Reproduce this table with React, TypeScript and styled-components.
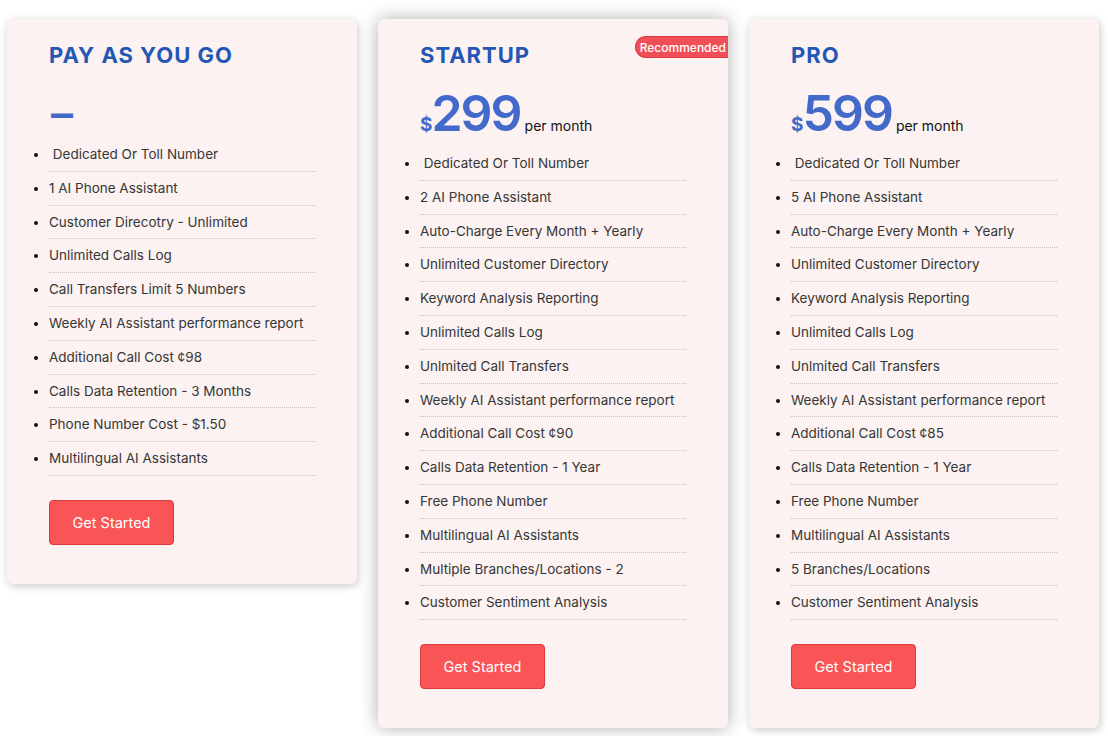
import styled, { createGlobalStyle } from 'styled-components';

const GlobalStyle = createGlobalStyle`
  html, body {
    margin: 0;
    padding: 0;
    background: #ffffff;
  }
  body {
    font-family: Inter, "Noto Sans", sans-serif;
    color: #333;
  }
`;

type Plan = {
  name: string;
  price?: string;
  recommended?: boolean;
  features: string[];
};

const plans: Plan[] = [
  {
    name: 'PAY AS YOU GO',
    features: [
      '\u00a0Dedicated Or Toll Number',
      '1 AI Phone Assistant',
      'Customer Direcotry - Unlimited',
      'Unlimited Calls Log',
      'Call Transfers Limit 5 Numbers',
      'Weekly AI Assistant performance report',
      'Additional Call Cost ¢98',
      'Calls Data Retention - 3 Months',
      'Phone Number Cost - $1.50',
      'Multilingual AI Assistants',
    ],
  },
  {
    name: 'STARTUP',
    price: '299',
    recommended: true,
    features: [
      '\u00a0Dedicated Or Toll Number',
      '2 AI Phone Assistant',
      'Auto-Charge Every Month + Yearly',
      'Unlimited Customer Directory',
      'Keyword Analysis Reporting',
      'Unlimited Calls Log',
      'Unlmited Call Transfers',
      'Weekly AI Assistant performance report',
      'Additional Call Cost ¢90',
      'Calls Data Retention - 1 Year',
      'Free Phone Number',
      'Multilingual AI Assistants',
      'Multiple Branches/Locations - 2',
      'Customer Sentiment Analysis',
    ],
  },
  {
    name: 'PRO',
    price: '599',
    features: [
      '\u00a0Dedicated Or Toll Number',
      '5 AI Phone Assistant',
      'Auto-Charge Every Month + Yearly',
      'Unlimited Customer Directory',
      'Keyword Analysis Reporting',
      'Unlimited Calls Log',
      'Unlmited Call Transfers',
      'Weekly AI Assistant performance report',
      'Additional Call Cost ¢85',
      'Calls Data Retention - 1 Year',
      'Free Phone Number',
      'Multilingual AI Assistants',
      '5 Branches/Locations',
      'Customer Sentiment Analysis',
    ],
  },
];

const Row = styled.div`
  display: flex;
  align-items: flex-start;
  gap: 21px;
  padding: 19px 0 8px 7px;
`;

const Card = styled.section<{ $raised?: boolean }>`
  position: relative;
  width: 350px;
  box-sizing: border-box;
  padding: 23px 42px 39px;
  background: #fbf2f1;
  border-radius: 6px;
  overflow: hidden;
  box-shadow: ${(p) =>
    p.$raised
      ? '0 0 18px rgba(0, 0, 0, 0.32)'
      : '1px 2px 8px rgba(0, 0, 0, 0.22)'};
`;

const Title = styled.h2`
  margin: 0;
  font-size: 22px;
  line-height: 26px;
  font-weight: 700;
  letter-spacing: 1px;
  color: #2457b5;
`;

const Badge = styled.span`
  position: absolute;
  top: 17px;
  right: 0;
  height: 22px;
  padding: 0 2px 0 4px;
  display: flex;
  align-items: center;
  font-size: 12px;
  font-weight: 500;
  color: #fff;
  background: #f04f57;
  border: 1px solid #d93a44;
  border-right: none;
  border-radius: 11px 0 0 11px;
  box-sizing: border-box;
`;

const PriceLine = styled.div<{ $empty?: boolean }>`
  display: flex;
  align-items: baseline;
  margin: ${(p) => (p.$empty ? '21px 0 1px' : '21px 0 10px')};
  height: 48px;
  color: #4369cb;
`;

const Currency = styled.span`
  font-size: 19px;
  font-weight: 700;
  margin-right: -1px;
`;

const Amount = styled.span`
  font-size: 50px;
  line-height: 48px;
  font-weight: 600;
  letter-spacing: -2px;
`;

const Dash = styled.span`
  font-size: 44px;
  line-height: 48px;
  font-weight: 600;
  padding-left: 2px;
`;

const Period = styled.span`
  font-size: 14px;
  font-weight: 400;
  color: #111;
  margin-left: 4px;
`;

const Features = styled.ul`
  margin: 0;
  padding: 0;
  list-style: disc outside;
`;

const Feature = styled.li`
  padding: 6px 0;
  line-height: 20.8px;
  font-size: 13.5px;
  color: #363636;
  border-bottom: 1px dotted #c9c2c1;
  &::marker {
    color: #111;
  }
`;

const Button = styled.button`
  display: block;
  margin-top: 24px;
  width: 125px;
  height: 45px;
  font-family: Inter, "Noto Sans", sans-serif;
  font-size: 14.5px;
  color: #fff;
  background: #fa5556;
  border: 1px solid #d8393d;
  border-radius: 4px;
  cursor: pointer;
`;

function PlanCard({ plan }: { plan: Plan }) {
  return (
    <Card $raised={plan.recommended}>
      {plan.recommended && <Badge>Recommended</Badge>}
      <Title>{plan.name}</Title>
      {plan.price ? (
        <PriceLine>
          <Currency>$</Currency>
          <Amount>{plan.price}</Amount>
          <Period>per month</Period>
        </PriceLine>
      ) : (
        <PriceLine $empty>
          <Dash>–</Dash>
        </PriceLine>
      )}
      <Features>
        {plan.features.map((f) => (
          <Feature key={f}>{f}</Feature>
        ))}
      </Features>
      <Button>Get Started</Button>
    </Card>
  );
}

export default function App() {
  return (
    <>
      <GlobalStyle />
      <Row>
        {plans.map((p) => (
          <PlanCard key={p.name} plan={p} />
        ))}
      </Row>
    </>
  );
}
